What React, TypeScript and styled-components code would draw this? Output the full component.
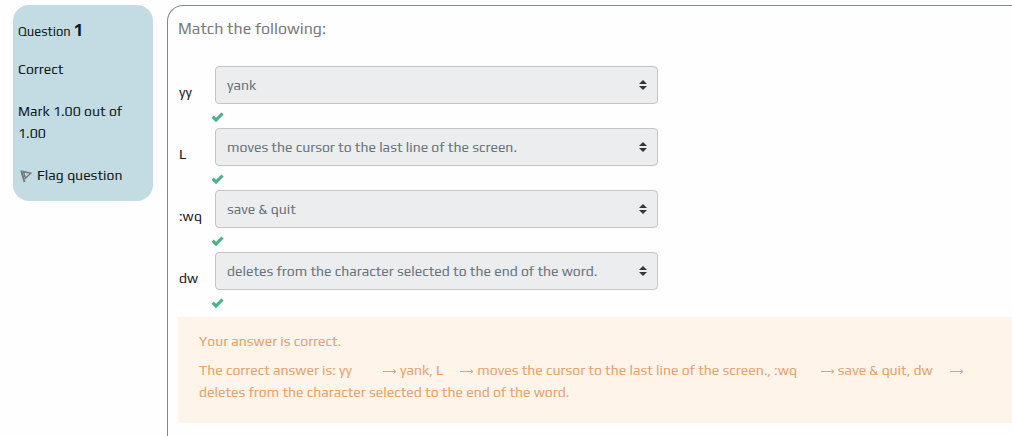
import React from "react";
import styled, { createGlobalStyle } from "styled-components";

const GlobalStyle = createGlobalStyle`
  *, *::before, *::after { box-sizing: border-box; }
  body {
    margin: 0;
    background: #fefefe;
    color: #1d2125;
    font: 14px/22px Play, Roboto, sans-serif;
  }
  p, h3 { margin: 0; }
`;

const Page = styled.div`
  display: flex;
  align-items: flex-start;
  gap: 14px;
  padding: 5px 0 0 13px;
`;

const Info = styled.aside`
  display: flex;
  flex-direction: column;
  flex: 0 0 140px;
  min-height: 196px;
  padding: 14px 5px;
  border-radius: 16px;
  background: #c3dce3;
  color: #111820;
`;

const QuestionNumber = styled.h3`
  margin-bottom: 15px;
  font-size: 13px;
  font-weight: 400;
  line-height: 22px;

  strong { font-size: 17px; }
`;

const InfoLine = styled.p`
  margin-bottom: 20px;
`;

const FlagButton = styled.button`
  display: flex;
  align-items: center;
  gap: 5px;
  padding: 0 2px;
  border: 0;
  background: none;
  color: inherit;
  font: inherit;
  cursor: pointer;
`;

const Content = styled.main`
  flex: 1;
  min-width: 0;
  min-height: calc(100vh - 5px);
  padding: 11px 0 12px 10px;
  border: 1px solid #7b8a90;
  border-width: 1px 0 0 1px;
  border-top-left-radius: 16px;
`;

const Prompt = styled.p`
  margin-bottom: 25px;
  color: #7b7c7c;
  font-size: 16px;
  line-height: 24px;
`;

const Answer = styled.div`
  display: grid;
  grid-template-columns: 37px minmax(0, 443px);
  grid-template-rows: 38px 24px;
`;

const AnswerLabel = styled.label`
  padding: 15px 0 0 1px;
`;

const SelectBox = styled.div`
  position: relative;
  height: 38px;
`;

const Select = styled.select`
  appearance: none;
  width: 100%;
  height: 38px;
  padding: 0 28px 0 11px;
  border: 1px solid #c3c6c9;
  border-radius: 4px;
  background: #ebedef;
  color: #6a737b;
  font: inherit;
  opacity: 1;
`;

const Carets = styled.svg`
  position: absolute;
  top: 14px;
  right: 11px;
  pointer-events: none;
`;

const Tick = styled.svg`
  display: block;
  grid-column: 2;
  margin: 8px 0 0 -4px;
`;

const Feedback = styled.section`
  margin-top: 3px;
  padding: 13px 21px 20px;
  min-height: 106px;
  background: #fff4ea;
  color: #e6a26b;
`;

const FeedbackLine = styled.p`
  margin-bottom: 7px;
`;

const Gap = styled.span<{ $width: number }>`
  display: inline-block;
  width: ${(p) => p.$width}px;
`;

const Arrow = styled.span`
  display: inline-block;
  width: 17px;
  white-space: nowrap;

  svg { display: block; }
`;

const answers = [
  { label: "yy", value: "yank", gap: 31 },
  { label: "L", value: "moves the cursor to the last line of the screen.", gap: 17 },
  { label: ":wq", value: "save & quit", gap: 24 },
  { label: "dw", value: "deletes from the character selected to the end of the word.", gap: 17 },
];

const RightArrow = () => (
  <Arrow role="img" aria-label="matches">
    <svg width="14" height="7" viewBox="0 0 14 7" fill="none" stroke="currentColor">
      <path d="M0 3.5H12.5M10.5 1.5L13 3.5L10.5 5.5" />
    </svg>
  </Arrow>
);

export default function App() {
  return (
    <>
      <GlobalStyle />
      <Page>
        <Info>
          <QuestionNumber>
            Question <strong>1</strong>
          </QuestionNumber>
          <InfoLine>Correct</InfoLine>
          <InfoLine>Mark 1.00 out of 1.00</InfoLine>
          <FlagButton type="button">
            <svg width="12" height="16" viewBox="0 0 12 16" fill="none" stroke="#74797b" aria-hidden="true">
              <path d="M1.2 3.5L4.5 15" strokeWidth="2" />
              <path d="M3.4 4.5L10.8 6.2L5.4 11.2Z" strokeWidth="1.5" />
            </svg>
            Flag question
          </FlagButton>
        </Info>
        <Content>
          <Prompt>Match the following:</Prompt>
          {answers.map(({ label, value }, i) => (
            <Answer key={label}>
              <AnswerLabel htmlFor={`answer-${i}`}>{label}</AnswerLabel>
              <SelectBox>
                <Select id={`answer-${i}`} disabled defaultValue={value}>
                  {answers.map((a) => (
                    <option key={a.label}>{a.value}</option>
                  ))}
                </Select>
                <Carets width="8" height="10" viewBox="0 0 8 10" fill="#30363b" aria-hidden="true">
                  <path d="M4 0L8 4H0ZM4 10L0 6H8Z" />
                </Carets>
              </SelectBox>
              <Tick width="13" height="11" viewBox="0 0 13 11" role="img" aria-label="Correct">
                <path d="M1.7 4.7L5 8L11.5 1.5" fill="none" stroke="#48b385" strokeWidth="3.1" />
              </Tick>
            </Answer>
          ))}
          <Feedback>
            <FeedbackLine>Your answer is correct.</FeedbackLine>
            <p>
              The correct answer is:{" "}
              {answers.map(({ label, value, gap }, i) => (
                <React.Fragment key={label}>
                  {label}
                  <Gap $width={gap} />
                  <RightArrow />
                  {value}
                  {i < answers.length - 1 && ", "}
                </React.Fragment>
              ))}
            </p>
          </Feedback>
        </Content>
      </Page>
    </>
  );
}
